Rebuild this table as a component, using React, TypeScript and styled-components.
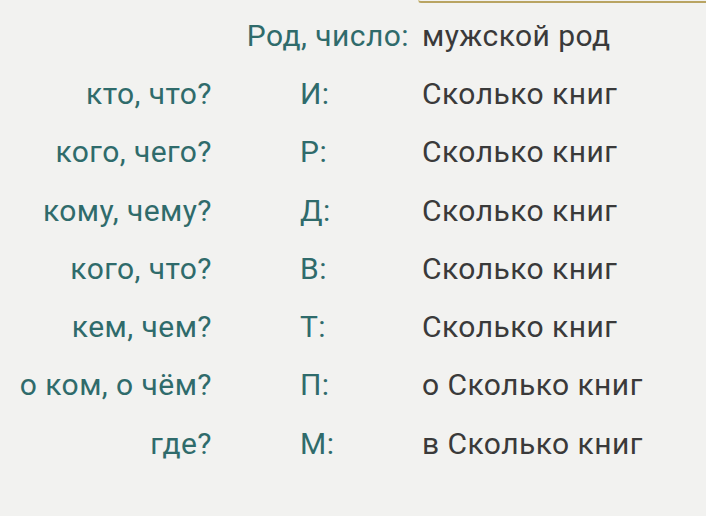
import React from "react";
import styled, { createGlobalStyle } from "styled-components";

const GlobalStyle = createGlobalStyle`
  html, body {
    margin: 0;
    padding: 0;
    background: #f2f2f0;
  }
  body {
    font-family: Roboto, "Noto Sans", sans-serif;
  }
`;

const Page = styled.div`
  width: 706px;
  height: 516px;
  overflow: hidden;
  background: #f2f2f0;
`;

// полоска сверху (низ карточки)
const TopStrip = styled.div`
  display: flex;
  height: 6px;
`;

const CardEdge = styled.div`
  margin-left: 418px;
  flex: 1;
  height: 1px;
  border-bottom: 2px solid #b9a462;
  border-left: 1px solid #d8cc9c;
  border-bottom-left-radius: 6px;
`;

const Table = styled.div`
  display: grid;
  grid-template-columns: 212px 210px 1fr;
  grid-auto-rows: 58.3px;
  align-items: center;
  font-size: 30px;
  letter-spacing: 0.45px;
`;

const HeadLabel = styled.div`
  grid-column: 1 / span 2;
  text-align: right;
  padding-right: 13px;
  color: #2f6b6b;
`;

const Question = styled.div`
  text-align: right;
  color: #2f6b6b;
`;

const Case = styled.div`
  padding-left: 88px;
  color: #2f6b6b;
`;

const Value = styled.div`
  color: #3a3a3a;
`;

const rows = [
  { q: "кто, что?", c: "И:", v: "Сколько книг" },
  { q: "кого, чего?", c: "Р:", v: "Сколько книг" },
  { q: "кому, чему?", c: "Д:", v: "Сколько книг" },
  { q: "кого, что?", c: "В:", v: "Сколько книг" },
  { q: "кем, чем?", c: "Т:", v: "Сколько книг" },
  { q: "о ком, о чём?", c: "П:", v: "о Сколько книг" },
  { q: "где?", c: "М:", v: "в Сколько книг" },
];

const App = () => {
  return (
    <>
      <GlobalStyle />
      <Page>
        <TopStrip>
          <CardEdge />
        </TopStrip>
        <Table>
          <HeadLabel>Род, число:</HeadLabel>
          <Value>мужской род</Value>
          {rows.map((r) => (
            <React.Fragment key={r.c}>
              <Question>{r.q}</Question>
              <Case>{r.c}</Case>
              <Value>{r.v}</Value>
            </React.Fragment>
          ))}
        </Table>
      </Page>
    </>
  );
};

export default App;
